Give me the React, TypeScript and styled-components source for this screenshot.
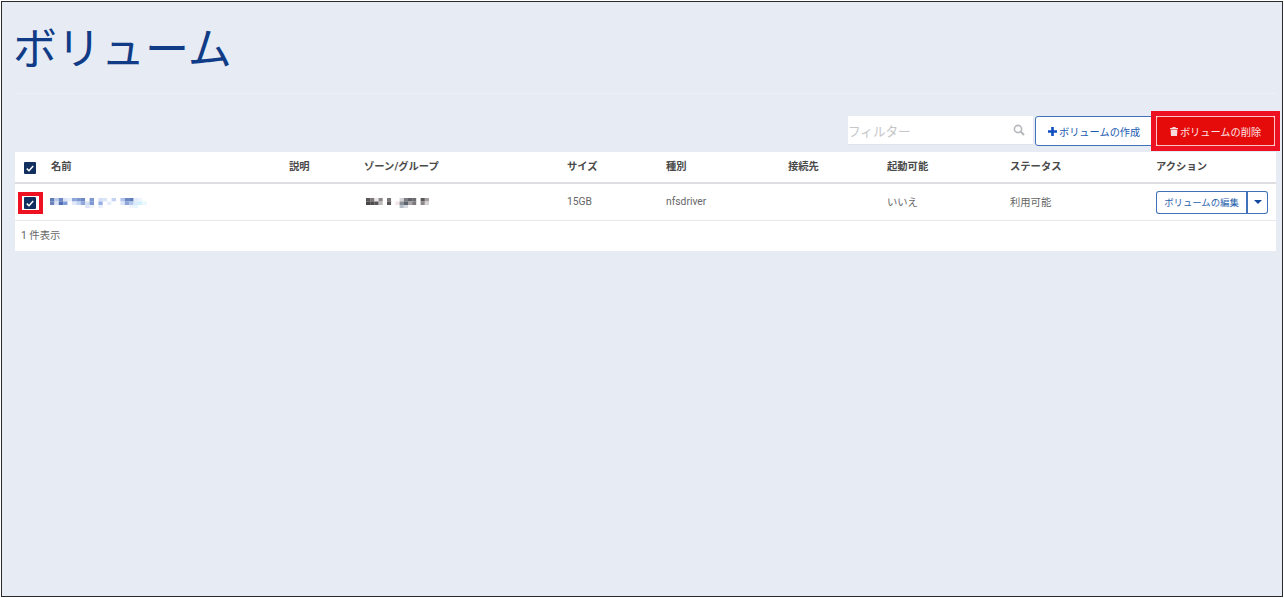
import styled, { createGlobalStyle } from 'styled-components';

const GlobalStyle = createGlobalStyle`
  html, body {
    margin: 0;
    padding: 0;
    background: #fff;
  }
  * {
    box-sizing: border-box;
  }
`;

const FONT = `Roboto, "Noto Sans CJK JP", sans-serif`;
const COLUMNS = '36px 238px 75px 203px 99px 122px 99px 123px 146px 120px';

// mosaic blocks of the blurred-out values, one row per array
const nameMosaic = [
  ['#5f7bb8', '#b9c9ea', '#6d88c4', '#dbe4f6', '#e8eefa', '#8ea6da', '#7d97d0', '#6d88c4', '#fff', '#7d97d0', '#fff', '#d5e0f5', '#d9e4f8', '#fff', '#c4d4f2', '#fff', '#b0c4ec', '#6d88c4', '#5f7bb8', '#e6eefb', '#f0f5fd', '#fff'],
  ['#6d84ba', '#dbe4f6', '#4f6eb4', '#7f9ad8', '#fff', '#e2eafa', '#c4d4f2', '#8ea6da', '#d5e0f5', '#7d97d0', '#fff', '#98b0e6', '#fff', '#e6eefb', '#fff', '#fff', '#dbe6f8', '#8ea6da', '#b4c8ee', '#d9ecfb', '#d4f0fb', '#eaf8fd'],
  ['#fff', '#fff', '#fff', '#fff', '#fff', '#fff', '#fff', '#fff', '#dbe4f6', '#eef2fb', '#fff', '#e8eefa', '#fff', '#fff', '#fff', '#fff', '#fff', '#fff', '#f0f5fd', '#e8f6fd', '#fff', '#fff'],
];

const zoneMosaic = [
  ['#5b585a', '#7b7678', '#e8e6e6', '#8a8688', '#fff', '#7a7678', '#fff', '#fff', '#d4d2d4', '#7c7e84', '#5f6268', '#6c6a6c', '#fff', '#5a5658', '#a4a0a2'],
  ['#4a4749', '#4f4c4e', '#56535a', '#bfbcbc', '#fff', '#5a5658', '#fff', '#f0e4e4', '#8a9098', '#5c626c', '#a8a4a6', '#7c787a', '#fff', '#8c8889', '#d8d4d4'],
  ['#fff', '#fff', '#fff', '#fff', '#fff', '#fff', '#fff', '#fff', '#b4bcc4', '#d4dae0', '#fff', '#fff', '#fff', '#fff', '#fff'],
];

const Check = () => (
  <CheckBox>
    <svg width="8" height="7" viewBox="0 0 8 7">
      <path d="M0.8 3.6 L3 5.7 L7.2 1.1" fill="none" stroke="#fff" strokeWidth="1.5" />
    </svg>
  </CheckBox>
);

const Mosaic = ({ rows, cell, left }: { rows: string[][]; cell: number; left: number }) => (
  <MosaicSvg
    $left={left}
    width={rows[0].length * cell}
    height={rows.length * 3.5}
    viewBox={`0 0 ${rows[0].length} ${rows.length}`}
    preserveAspectRatio="none"
  >
    {rows.map((row, y) =>
      row.map((fill, x) => <rect key={`${x}-${y}`} x={x} y={y} width="1.02" height="1.02" fill={fill} />),
    )}
  </MosaicSvg>
);

const App = () => {
  const headers = ['名前', '説明', 'ゾーン/グループ', 'サイズ', '種別', '接続先', '起動可能', 'ステータス', 'アクション'];

  return (
    <>
      <GlobalStyle />
      <Page>
        <Title>ボリューム</Title>
        <Divider />
        <Toolbar>
          <Filter>
            <FilterText>フィルター</FilterText>
            <svg width="12" height="12" viewBox="0 0 12 12">
              <circle cx="5" cy="5" r="3.6" fill="none" stroke="#b4b7bc" strokeWidth="1.6" />
              <path d="M7.8 7.8 L11 11" stroke="#b4b7bc" strokeWidth="2" />
            </svg>
          </Filter>
          <CreateButton>
            <svg width="9" height="9" viewBox="0 0 9 9">
              <path d="M3.2 0h2.6v3.2H9v2.6H5.8V9H3.2V5.8H0V3.2h3.2z" fill="#0f4fc0" />
            </svg>
            ボリュームの作成
          </CreateButton>
          <DeleteFrame>
            <DeleteButton>
              <svg width="8" height="9" viewBox="0 0 8 9">
                <path d="M2.6 0h2.8l.4 1H8v1H0V1h2.2zM.6 2.6h6.8L7 9H1z" fill="#f6dcdc" />
              </svg>
              ボリュームの削除
            </DeleteButton>
          </DeleteFrame>
        </Toolbar>
        <Table>
          <HeadRow>
            <CheckCell $inset={9}>
              <Check />
            </CheckCell>
            {headers.map((h) => (
              <HeadCell key={h}>{h}</HeadCell>
            ))}
          </HeadRow>
          <BodyRow>
            <CheckCell $inset={3}>
              <Highlight>
                <Check />
              </Highlight>
            </CheckCell>
            <Cell>
              <Mosaic rows={nameMosaic} cell={4.4} left={-1} />
            </Cell>
            <Cell />
            <Cell>
              <Mosaic rows={zoneMosaic} cell={4.2} left={2} />
            </Cell>
            <Cell>15GB</Cell>
            <Cell>nfsdriver</Cell>
            <Cell />
            <Cell>いいえ</Cell>
            <Cell>利用可能</Cell>
            <Cell>
              <SplitButton>
                <EditButton>ボリュームの編集</EditButton>
                <CaretButton>
                  <svg width="8" height="4" viewBox="0 0 8 4">
                    <path d="M0 0h8L4 4z" fill="#124a9c" />
                  </svg>
                </CaretButton>
              </SplitButton>
            </Cell>
          </BodyRow>
          <Footer>1 件表示</Footer>
        </Table>
      </Page>
    </>
  );
};

const Page = styled.div`
  margin: 1px 0 0 1px;
  width: 1282px;
  height: 596px;
  border: 1px solid #2a2a2c;
  background: #e6ebf4;
  padding: 0 6px 0 13px;
  font-family: ${FONT};
  overflow: hidden;
`;

const Title = styled.h1`
  margin: 0 0 0 -2px;
  padding: 16px 0 0 0;
  height: 91px;
  font-size: 44px;
  line-height: 64px;
  font-weight: 400;
  color: #0f3b87;
`;

const Divider = styled.div`
  height: 1px;
  background: #edf0f7;
`;

const Toolbar = styled.div`
  display: flex;
  justify-content: flex-end;
  align-items: flex-start;
  height: 58px;
  padding-top: 22px;
`;

const Filter = styled.div`
  width: 185px;
  height: 28px;
  margin-right: 2px;
  background: #fff;
  display: flex;
  align-items: center;
  justify-content: space-between;
  padding-right: 8px;
  box-shadow: 0 1px 1px #dfe3ea;
`;

const FilterText = styled.span`
  font-size: 12.6px;
  color: #c4c6ca;
`;

const CreateButton = styled.button`
  display: flex;
  align-items: center;
  justify-content: flex-start;
  gap: 2px;
  width: 121px;
  height: 30px;
  background: #fff;
  border: 1px solid #3f72b8;
  border-radius: 3px;
  color: #1c5bb0;
  font-family: ${FONT};
  font-size: 10.2px;
  padding: 0 0 0 12px;
`;

// the red frame lies over the neighbouring button, hence the negative margins
const DeleteFrame = styled.div`
  position: relative;
  margin: -5px -4px 0 -5px;
  border: 5px solid #ee1122;
  background: #fff;
`;

const DeleteButton = styled.button`
  display: flex;
  align-items: center;
  justify-content: center;
  gap: 2px;
  width: 119px;
  height: 30px;
  background: #e60b0b;
  border: 1px solid #f6c4c4;
  border-radius: 2px;
  color: #fbe3e3;
  font-family: ${FONT};
  font-size: 10.2px;
  padding: 0;
`;

const Table = styled.div`
  width: 1261px;
  background: #fff;
  font-size: 10.3px;
  color: #444;
`;

const Row = styled.div`
  display: grid;
  grid-template-columns: ${COLUMNS};
  align-items: center;
`;

const HeadRow = styled(Row)`
  height: 32px;
  border-bottom: 2px solid #dcdee2;
`;

const BodyRow = styled(Row)`
  height: 37px;
  border-bottom: 1px solid #e6e8ec;
`;

const Cell = styled.div`
  display: flex;
  align-items: center;
  min-width: 0;
  height: 100%;
  padding-bottom: 2px;
  color: #666;
`;

const HeadCell = styled(Cell)`
  padding-bottom: 3px;
  font-weight: 700;
  color: #4a4a4a;
`;

const CheckCell = styled(Cell)<{ $inset: number }>`
  padding: 2px 0 0 ${(p) => p.$inset}px;
`;

const Highlight = styled.div`
  display: flex;
  padding: 1px 3px 1px 2px;
  border: 4px solid #ee1122;
`;

const CheckBox = styled.span`
  display: flex;
  align-items: center;
  justify-content: center;
  width: 12px;
  height: 12px;
  border-radius: 1px;
  background: #12305f;
`;

const MosaicSvg = styled.svg<{ $left: number }>`
  display: block;
  margin: 4px 0 0 ${(p) => p.$left}px;
  filter: blur(0.35px);
`;

const SplitButton = styled.div`
  display: flex;
  height: 23px;
  width: 112px;
  margin-top: 2px;
`;

const EditButton = styled.button`
  flex: 1;
  background: #fff;
  border: 1px solid #3f72b8;
  border-right-width: 2px;
  border-radius: 3px 0 0 3px;
  color: #2a62ad;
  font-family: ${FONT};
  font-size: 9.4px;
  padding: 0;
`;

const CaretButton = styled.button`
  width: 20px;
  display: flex;
  align-items: center;
  justify-content: center;
  background: #fff;
  border: 1px solid #3f72b8;
  border-left: 0;
  border-radius: 0 3px 3px 0;
  padding: 0;
`;

const Footer = styled.div`
  height: 30px;
  display: flex;
  align-items: center;
  padding: 0 0 4px 6px;
  color: #666;
`;

export default App;
